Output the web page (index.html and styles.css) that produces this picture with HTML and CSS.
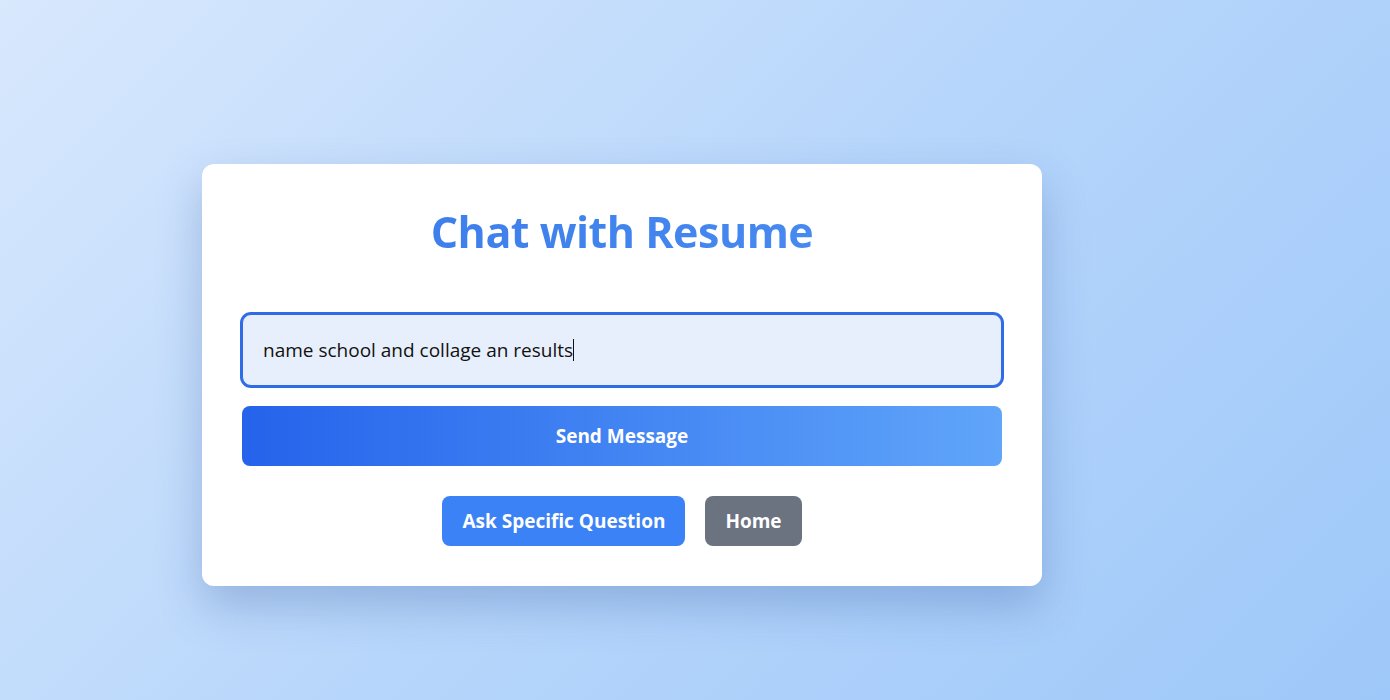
FILE: index.html
```html
<!DOCTYPE html>
<html lang="en">
<head>
<meta charset="utf-8">
<title>Chat with Resume</title>
<link rel="stylesheet" href="styles.css">
</head>
<body>
<main class="page">
  <section class="card">
    <h1 class="title">Chat with Resume</h1>
    <div class="input-box">
      <span class="input-text">name school and collage an results</span><span class="caret"></span>
    </div>
    <button class="send-btn">Send Message</button>
    <div class="actions">
      <button class="btn btn-blue">Ask Specific Question</button>
      <button class="btn btn-gray">Home</button>
    </div>
  </section>
</main>
</body>
</html>
```
FILE: styles.css
```css
html, body {
  margin: 0;
  height: 100%;
}
body {
  background: linear-gradient(135deg, #d8e8fd 0%, #b7d6fb 50%, #9ec8f9 100%);
  font-family: "Open Sans", "Noto Sans", sans-serif;
}
.page {
  padding: 164px 0 0 202px;
}
.card {
  width: 840px;
  box-sizing: border-box;
  background: #fff;
  border-radius: 12px;
  padding: 40px;
  box-shadow: 0 20px 45px rgba(40, 80, 150, 0.28);
}
.title {
  margin: 0 0 54px;
  text-align: center;
  font-size: 43px;
  font-weight: 700;
  line-height: 56px;
  letter-spacing: -0.5px;
  background: linear-gradient(90deg, #3a7ae9, #4a8ef2);
  -webkit-background-clip: text;
  background-clip: text;
  color: transparent;
}
.input-box {
  height: 72px;
  box-sizing: border-box;
  border: 1px solid #2f6be6;
  box-shadow: 0 0 0 2px #2f6be6;
  border-radius: 9px;
  background: #e8effc;
  display: flex;
  align-items: center;
  padding: 0 20px;
  font-size: 19px;
  color: #111;
}
.caret {
  display: inline-block;
  width: 1px;
  height: 22px;
  background: #111;
}
.send-btn {
  display: block;
  width: 100%;
  height: 60px;
  margin-top: 20px;
  border: none;
  border-radius: 8px;
  background: linear-gradient(90deg, #2563eb 0%, #60a5fa 100%);
  color: #fff;
  font-family: inherit;
  font-size: 19px;
  font-weight: 700;
}
.actions {
  display: flex;
  justify-content: center;
  gap: 20px;
  margin-top: 30px;
}
.btn {
  height: 50px;
  padding: 0 20px;
  border: none;
  border-radius: 8px;
  color: #fff;
  font-family: inherit;
  font-size: 19px;
  font-weight: 700;
}
.btn-blue { background: #3b82f6; }
.btn-gray { background: #6b7280; }
```
